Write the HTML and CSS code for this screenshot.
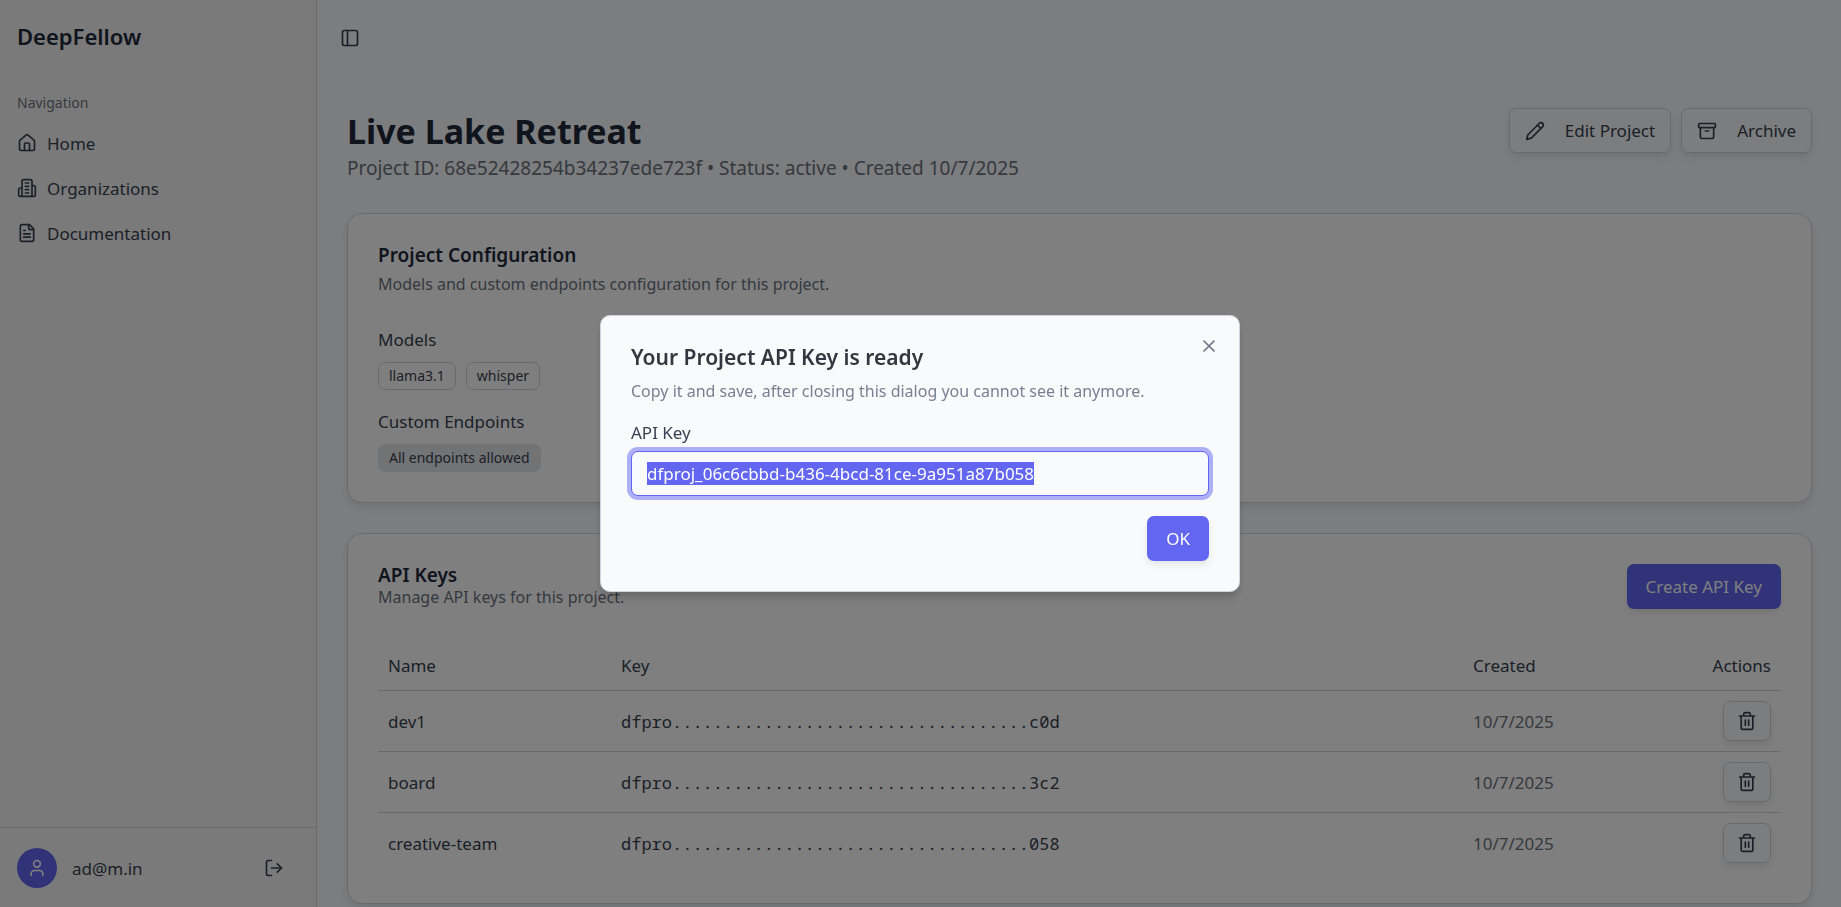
FILE: index.html
```html
<!doctype html>
<html lang="en">
<head>
<meta charset="UTF-8">
<meta name="viewport" content="width=device-width, initial-scale=1">
<title>DeepFellow</title>
<link rel="stylesheet" href="styles.css">
</head>
<body>
	<div class="layout">
		<aside class="sidebar">
			<div class="brand">DeepFellow</div>
			<nav class="nav">
				<div class="nav-label">Navigation</div>
				<a class="nav-link" href="#">
					<svg class="icon" viewBox="0 0 24 24"><path d="M15 21v-8a1 1 0 0 0-1-1h-4a1 1 0 0 0-1 1v8"/><path d="M3 10a2 2 0 0 1 .709-1.528l7-6a2 2 0 0 1 2.582 0l7 6A2 2 0 0 1 21 10v9a2 2 0 0 1-2 2H5a2 2 0 0 1-2-2z"/></svg>
					Home
				</a>
				<a class="nav-link" href="#">
					<svg class="icon" viewBox="0 0 24 24"><path d="M6 22V4a2 2 0 0 1 2-2h8a2 2 0 0 1 2 2v18Z"/><path d="M6 12H4a2 2 0 0 0-2 2v6a2 2 0 0 0 2 2h2"/><path d="M18 9h2a2 2 0 0 1 2 2v9a2 2 0 0 1-2 2h-2"/><path d="M10 6h4M10 10h4M10 14h4M10 18h4"/></svg>
					Organizations
				</a>
				<a class="nav-link" href="#">
					<svg class="icon" viewBox="0 0 24 24"><path d="M15 2H6a2 2 0 0 0-2 2v16a2 2 0 0 0 2 2h12a2 2 0 0 0 2-2V7Z"/><path d="M14 2v4a2 2 0 0 0 2 2h4"/><path d="M10 9H8M16 13H8M16 17H8"/></svg>
					Documentation
				</a>
			</nav>
			<div class="account">
				<span class="avatar"><svg class="icon" viewBox="0 0 24 24"><circle cx="12" cy="7" r="4"/><path d="M19 21v-2a4 4 0 0 0-4-4H9a4 4 0 0 0-4 4v2"/></svg></span>
				<span>ad@m.in</span>
				<button class="icon-button logout" type="button" aria-label="Log out">
					<svg class="icon" viewBox="0 0 24 24"><path d="M9 21H5a2 2 0 0 1-2-2V5a2 2 0 0 1 2-2h4"/><path d="m16 17 5-5-5-5"/><path d="M21 12H9"/></svg>
				</button>
			</div>
		</aside>

		<div class="page">
			<header class="topbar">
				<button class="icon-button" type="button" aria-label="Toggle sidebar">
					<svg class="icon" viewBox="0 0 24 24"><rect x="3" y="3" width="18" height="18" rx="2"/><path d="M9 3v18"/></svg>
				</button>
			</header>
			<main class="content">
				<div class="page-head">
					<div>
						<h1 class="page-title">Live Lake Retreat</h1>
						<p class="page-meta">Project ID: 68e52428254b34237ede723f • Status: active • Created 10/7/2025</p>
					</div>
					<div class="page-actions">
						<button class="button outline" type="button">
							<svg class="icon" viewBox="0 0 24 24"><path d="M17 3a2.85 2.83 0 1 1 4 4L7.5 20.5 2 22l1.5-5.5Z"/><path d="m15 5 4 4"/></svg>
							Edit Project
						</button>
						<button class="button outline" type="button">
							<svg class="icon" viewBox="0 0 24 24"><rect x="2" y="3" width="20" height="5" rx="1"/><path d="M4 8v11a2 2 0 0 0 2 2h12a2 2 0 0 0 2-2V8"/><path d="M10 12h4"/></svg>
							Archive
						</button>
					</div>
				</div>

				<section class="card">
					<h2 class="card-title">Project Configuration</h2>
					<p class="card-text spaced">Models and custom endpoints configuration for this project.</p>
					<div class="config">
						<div class="config-group">
							<h3 class="config-title">Models</h3>
							<div class="badges">
								<span class="badge">llama3.1</span>
								<span class="badge">whisper</span>
							</div>
						</div>
						<div class="config-group">
							<h3 class="config-title">Custom Endpoints</h3>
							<div class="badges">
								<span class="badge filled">All endpoints allowed</span>
							</div>
						</div>
					</div>
				</section>

				<section class="card">
					<div class="card-head">
						<div>
							<h2 class="card-title">API Keys</h2>
							<p class="card-text">Manage API keys for this project.</p>
						</div>
						<button class="button primary" type="button">Create API Key</button>
					</div>
					<table class="keys">
						<thead>
							<tr><th class="col-name">Name</th><th class="col-key">Key</th><th class="col-created">Created</th><th class="col-actions">Actions</th></tr>
						</thead>
						<tbody>
							<tr>
								<td>dev1</td>
								<td class="key">dfpro...................................c0d</td>
								<td class="muted">10/7/2025</td>
								<td class="col-actions"><button class="button outline small" type="button" aria-label="Delete dev1"><svg class="icon" viewBox="0 0 24 24"><path d="M3 6h18M19 6v14a2 2 0 0 1-2 2H7a2 2 0 0 1-2-2V6M8 6V4a2 2 0 0 1 2-2h4a2 2 0 0 1 2 2v2M10 11v6M14 11v6"/></svg></button></td>
							</tr>
							<tr>
								<td>board</td>
								<td class="key">dfpro...................................3c2</td>
								<td class="muted">10/7/2025</td>
								<td class="col-actions"><button class="button outline small" type="button" aria-label="Delete board"><svg class="icon" viewBox="0 0 24 24"><path d="M3 6h18M19 6v14a2 2 0 0 1-2 2H7a2 2 0 0 1-2-2V6M8 6V4a2 2 0 0 1 2-2h4a2 2 0 0 1 2 2v2M10 11v6M14 11v6"/></svg></button></td>
							</tr>
							<tr>
								<td>creative-team</td>
								<td class="key">dfpro...................................058</td>
								<td class="muted">10/7/2025</td>
								<td class="col-actions"><button class="button outline small" type="button" aria-label="Delete creative-team"><svg class="icon" viewBox="0 0 24 24"><path d="M3 6h18M19 6v14a2 2 0 0 1-2 2H7a2 2 0 0 1-2-2V6M8 6V4a2 2 0 0 1 2-2h4a2 2 0 0 1 2 2v2M10 11v6M14 11v6"/></svg></button></td>
							</tr>
						</tbody>
					</table>
				</section>
			</main>
		</div>
	</div>

	<div class="overlay">
		<div class="dialog" role="dialog" aria-modal="true" aria-labelledby="dialog-title">
			<h2 class="dialog-title" id="dialog-title">Your Project API Key is ready</h2>
			<p class="dialog-text">Copy it and save, after closing this dialog you cannot see it anymore.</p>
			<label class="field-label" for="api-key">API Key</label>
			<input class="field" id="api-key" type="text" value="dfproj_06c6cbbd-b436-4bcd-81ce-9a951a87b058" readonly>
			<div class="dialog-actions">
				<button class="button primary" type="button">OK</button>
			</div>
			<button class="icon-button close" type="button" aria-label="Close">
				<svg class="icon" viewBox="0 0 24 24"><path d="M18 6 6 18M6 6l12 12"/></svg>
			</button>
		</div>
	</div>
	<script src="main.js"></script>
</body>
</html>
```

FILE: styles.css
```css
* {
	box-sizing: border-box;
}

body {
	margin: 0;
	background-color: #f8fafc;
	color: #374151;
	font-family: "Noto Sans", "Open Sans", sans-serif;
	font-size: 17px;
	line-height: 25px;
	overflow: hidden;
}

h1, h2, h3, p {
	margin: 0;
}

button, input {
	font: inherit;
	color: inherit;
}

.icon {
	width: 20px;
	height: 20px;
	flex: none;
	fill: none;
	stroke: currentColor;
	stroke-width: 2;
	stroke-linecap: round;
	stroke-linejoin: round;
}

.layout {
	display: flex;
	height: 100vh;
}

/* sidebar */
.sidebar {
	display: flex;
	flex-direction: column;
	flex: none;
	width: 317px;
	background-color: #f5f5f5;
	border-right: 1px solid #d1d5db;
}

.brand {
	padding: 21px 17px 24px;
	color: #1e293b;
	font-size: 22px;
	line-height: 30px;
	font-weight: 600;
}

.nav {
	display: flex;
	flex-direction: column;
	gap: 5px;
	padding: 8px 17px;
	flex: 1;
}

.nav-label {
	color: #6b7280;
	font-size: 14px;
	line-height: 40px;
	margin-bottom: -5px;
}

.nav-link {
	display: flex;
	align-items: center;
	gap: 10px;
	height: 40px;
	color: inherit;
	text-decoration: none;
}

.account {
	display: flex;
	align-items: center;
	gap: 15px;
	padding: 20px 17px 19px;
	border-top: 1px solid #d1d5db;
}

.avatar {
	display: flex;
	align-items: center;
	justify-content: center;
	width: 40px;
	height: 40px;
	border-radius: 50%;
	background-color: #6366f1;
	color: #ffffff;
}

.icon-button {
	display: flex;
	padding: 0;
	border: 0;
	background: none;
	cursor: pointer;
}

.logout {
	margin-left: auto;
	padding: 10px 15px;
}

/* page */
.page {
	flex: 1;
	min-width: 0;
}

.topbar {
	display: flex;
	align-items: center;
	height: 78px;
	padding: 0 23px 2px;
}

.content {
	display: flex;
	flex-direction: column;
	gap: 30px;
	padding: 30px 29px 30px 30px;
}

.page-head, .card-head {
	display: flex;
	justify-content: space-between;
	align-items: flex-start;
}

.page-title {
	color: #1e293b;
	font-size: 34px;
	line-height: 46px;
	font-weight: 700;
}

.page-meta {
	color: #6b7280;
	font-size: 19px;
	line-height: 29px;
}

.page-actions {
	display: flex;
	gap: 10px;
}

.button {
	display: flex;
	align-items: center;
	justify-content: center;
	gap: 20px;
	height: 45px;
	padding: 0 15px;
	border: 1px solid transparent;
	border-radius: 7px;
	cursor: pointer;
	box-shadow: 0 4px 8px -1px rgba(0, 0, 0, 0.1);
}

.outline {
	background-color: #f8fafc;
	border-color: #d1d5db;
}

.primary {
	background-color: #6366f1;
	color: #ffffff;
	padding: 0 18px;
}

.small {
	display: inline-flex;
	vertical-align: top;
	height: 40px;
	padding: 0 13px;
}

.card {
	padding: 30px;
	background-color: #ffffff;
	border: 1px solid #d1d5db;
	border-radius: 15px;
	box-shadow: 0 4px 8px -1px rgba(0, 0, 0, 0.1);
}

.card-title {
	color: #1e293b;
	font-size: 19px;
	line-height: 22px;
	font-weight: 600;
}

.card-text {
	color: #6b7280;
	font-size: 16px;
	line-height: 22px;
}

.spaced {
	margin-top: 7px;
}

.config {
	display: flex;
	flex-direction: column;
	gap: 20px;
	margin-top: 33px;
}

.config-title {
	font-size: 17px;
	line-height: 24px;
	font-weight: 400;
}

.badges {
	display: flex;
	gap: 10px;
	margin-top: 10px;
}

.badge {
	padding: 3px 10px;
	border: 1px solid #d1d5db;
	border-radius: 7px;
	font-size: 14px;
	line-height: 20px;
}

.filled {
	background-color: #e5e7eb;
	border-color: #e5e7eb;
}

.keys {
	width: 100%;
	margin-top: 32px;
	border-collapse: separate;
	border-spacing: 0;
	table-layout: fixed;
}

.keys th {
	height: 50px;
	padding: 0 10px;
	border-bottom: 1px solid #d1d5db;
	font-weight: 400;
	text-align: left;
}

.keys td {
	padding: 10px;
	border-bottom: 1px solid #d1d5db;
}

.keys tbody tr:last-child td {
	border-bottom: 0;
}

.keys .col-name {
	width: 233px;
}

.keys .col-created {
	width: 218px;
}

.keys th.col-actions {
	width: 100px;
}

.keys .col-actions {
	text-align: right;
}

.key {
	font-family: "Noto Sans Mono", "DejaVu Sans Mono", monospace;
}

.keys .muted {
	color: #6b7280;
}

/* dialog */
.overlay {
	position: fixed;
	inset: 0;
	display: flex;
	align-items: center;
	justify-content: center;
	padding-right: 1px;
	background-color: rgba(0, 0, 0, 0.5);
}

.dialog {
	position: relative;
	width: 640px;
	padding: 30px;
	background-color: #f8fafc;
	border: 1px solid #d1d5db;
	border-radius: 10px;
	box-shadow: 0 4px 8px -1px rgba(0, 0, 0, 0.1), 0 8px 10px -1px rgba(0, 0, 0, 0.1);
}

.dialog-title {
	color: #333840;
	font-size: 21px;
	line-height: 23px;
	font-weight: 600;
}

.dialog-text {
	margin-top: 10px;
	color: #7a8092;
	font-size: 16px;
}

.field-label {
	display: block;
	margin-top: 20px;
	line-height: 17px;
}

.field {
	display: block;
	width: 100%;
	height: 45px;
	margin-top: 10px;
	padding: 0 15px;
	background-color: #f8fafc;
	border: 1px solid #6366f1;
	border-radius: 7px;
	outline: 0;
	box-shadow: 0 0 0 4px rgba(99, 102, 241, 0.5);
}

.field::selection {
	background-color: #6366f1;
	color: #ffffff;
}

.dialog-actions {
	display: flex;
	justify-content: flex-end;
	margin-top: 20px;
}

.close {
	position: absolute;
	top: 20px;
	right: 20px;
	color: #6b7280;
}
```

FILE: main.js
```js
var keyField = document.getElementById("api-key");
keyField.focus();
keyField.select();
```
